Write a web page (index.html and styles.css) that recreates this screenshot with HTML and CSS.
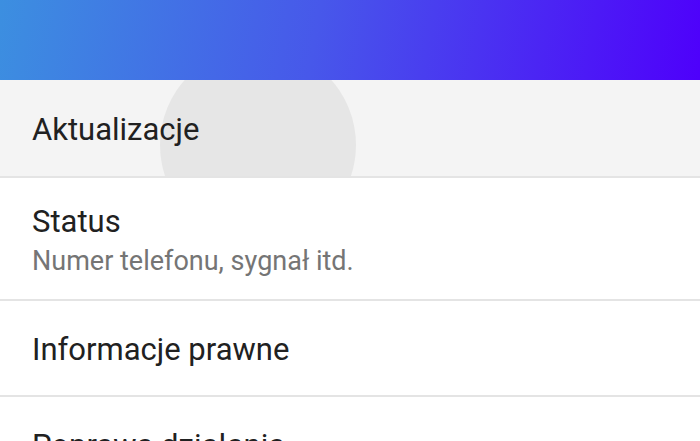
FILE: index.html
```html
<!DOCTYPE html>
<html>
<head>
<meta charset="utf-8">
<link rel="stylesheet" href="styles.css">
</head>
<body>
<div class="header"></div>
<div class="list">
  <div class="item item-pressed">
    <span class="ripple"></span>
    <div class="title">Aktualizacje</div>
  </div>
  <div class="item item-two">
    <div class="title">Status</div>
    <div class="subtitle">Numer telefonu, sygnał itd.</div>
  </div>
  <div class="item">
    <div class="title">Informacje prawne</div>
  </div>
  <div class="item">
    <div class="title">Poprawa działania</div>
  </div>
</div>
</body>
</html>
```
FILE: styles.css
```css
html, body {
  margin: 0;
  padding: 0;
  background: #ffffff;
  overflow: hidden;
  font-family: Roboto, "Noto Sans", sans-serif;
}
.header {
  height: 80px;
  background: linear-gradient(100deg, #3c8fe0 0%, #4758ea 45%, #4e00fb 100%);
  position: relative;
  z-index: 2;
}
.list {
  display: flex;
  flex-direction: column;
}
.item {
  position: relative;
  overflow: hidden;
  height: 96px;
  padding: 4px 32px 0;
  display: flex;
  flex-direction: column;
  justify-content: center;
  border-bottom: 2px solid #e4e4e4;
  box-sizing: border-box;
}
.item-pressed {
  background: #f4f4f4;
  height: 98px;
}
.item-two {
  height: 123px;
}
.ripple {
  position: absolute;
  left: 160px;
  top: -33px;
  width: 196px;
  height: 196px;
  border-radius: 50%;
  background: #e6e6e6;
}
.title {
  position: relative;
  font-size: 31px;
  color: #212121;
  line-height: 36px;
}
.subtitle {
  position: relative;
  font-size: 27px;
  color: #757575;
  line-height: 32px;
  margin-top: 5px;
}
```
